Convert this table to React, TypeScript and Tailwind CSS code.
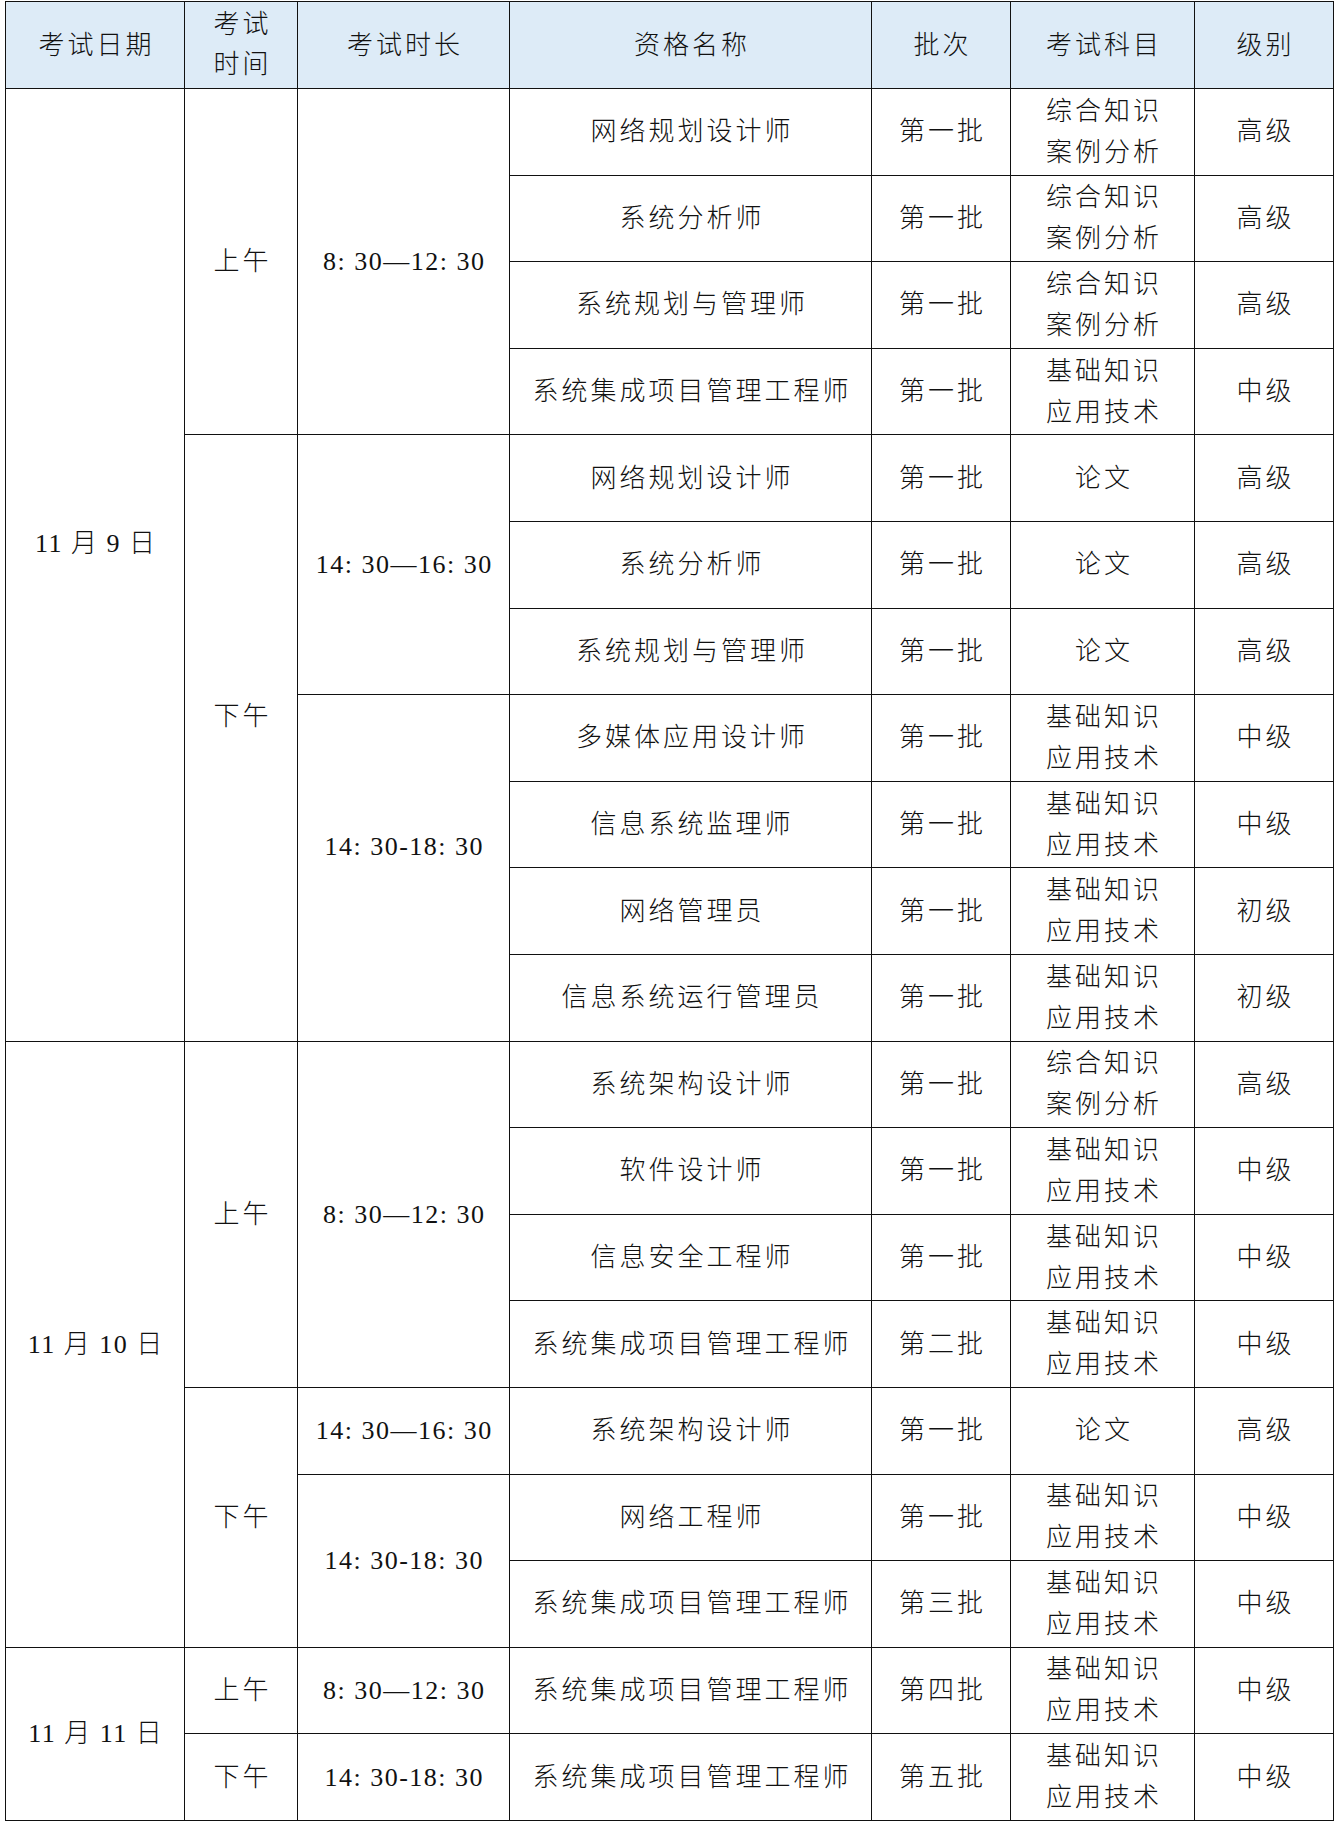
import React from "react";

type Span = { text: string; span: number; up?: boolean };
type Row = {
  date?: Span;
  time?: Span;
  dur?: Span;
  name: string;
  batch: string;
  subj: string[];
  level: string;
};

const JC = ["基础知识", "应用技术"];
const ZH = ["综合知识", "案例分析"];
const LW = ["论文"];

const rows: Row[] = [
  { date: { text: "11 月 9 日", span: 11, up: true }, time: { text: "上午", span: 4 }, dur: { text: "8: 30—12: 30", span: 4 }, name: "网络规划设计师", batch: "第一批", subj: ZH, level: "高级" },
  { name: "系统分析师", batch: "第一批", subj: ZH, level: "高级" },
  { name: "系统规划与管理师", batch: "第一批", subj: ZH, level: "高级" },
  { name: "系统集成项目管理工程师", batch: "第一批", subj: JC, level: "中级" },
  { time: { text: "下午", span: 7, up: true }, dur: { text: "14: 30—16: 30", span: 3 }, name: "网络规划设计师", batch: "第一批", subj: LW, level: "高级" },
  { name: "系统分析师", batch: "第一批", subj: LW, level: "高级" },
  { name: "系统规划与管理师", batch: "第一批", subj: LW, level: "高级" },
  { dur: { text: "14: 30-18: 30", span: 4, up: true }, name: "多媒体应用设计师", batch: "第一批", subj: JC, level: "中级" },
  { name: "信息系统监理师", batch: "第一批", subj: JC, level: "中级" },
  { name: "网络管理员", batch: "第一批", subj: JC, level: "初级" },
  { name: "信息系统运行管理员", batch: "第一批", subj: JC, level: "初级" },
  { date: { text: "11 月 10 日", span: 7 }, time: { text: "上午", span: 4 }, dur: { text: "8: 30—12: 30", span: 4 }, name: "系统架构设计师", batch: "第一批", subj: ZH, level: "高级" },
  { name: "软件设计师", batch: "第一批", subj: JC, level: "中级" },
  { name: "信息安全工程师", batch: "第一批", subj: JC, level: "中级" },
  { name: "系统集成项目管理工程师", batch: "第二批", subj: JC, level: "中级" },
  { time: { text: "下午", span: 3 }, dur: { text: "14: 30—16: 30", span: 1 }, name: "系统架构设计师", batch: "第一批", subj: LW, level: "高级" },
  { dur: { text: "14: 30-18: 30", span: 2 }, name: "网络工程师", batch: "第一批", subj: JC, level: "中级" },
  { name: "系统集成项目管理工程师", batch: "第三批", subj: JC, level: "中级" },
  { date: { text: "11 月 11 日", span: 2 }, time: { text: "上午", span: 1 }, dur: { text: "8: 30—12: 30", span: 1 }, name: "系统集成项目管理工程师", batch: "第四批", subj: JC, level: "中级" },
  { time: { text: "下午", span: 1 }, dur: { text: "14: 30-18: 30", span: 1 }, name: "系统集成项目管理工程师", batch: "第五批", subj: JC, level: "中级" },
];

const cell = "border-[1.5px] border-[#111] text-center align-middle p-0";
const upCell = "border-[1.5px] border-[#111] text-center align-middle p-0 pb-[42px]";
const txt = "tracking-[3px] pl-[3px]";

export default function App() {
  return (
    <div
      className="w-[1338px] h-[1828px] bg-white pl-[5px] pt-[1px] text-[#111] text-[26px] leading-[41px] font-light"
      style={{ fontFamily: '"Liberation Serif", "Noto Sans CJK SC", serif' }}
    >
      <table className="border-collapse table-fixed w-[1328px]">
        <colgroup>
          <col className="w-[179px]" />
          <col className="w-[113px]" />
          <col className="w-[212px]" />
          <col className="w-[362px]" />
          <col className="w-[139px]" />
          <col className="w-[184px]" />
          <col className="w-[139px]" />
        </colgroup>
        <thead>
          <tr className="h-[87px] bg-[#ddebf7]">
            <th className={`${cell} font-light`}><span className={txt}>考试日期</span></th>
            <th className={`${cell} font-light leading-[40px]`}>
              <div className={txt}>考试</div>
              <div className={txt}>时间</div>
            </th>
            <th className={`${cell} font-light`}><span className={txt}>考试时长</span></th>
            <th className={`${cell} font-light`}><span className={txt}>资格名称</span></th>
            <th className={`${cell} font-light`}><span className={txt}>批次</span></th>
            <th className={`${cell} font-light`}><span className={txt}>考试科目</span></th>
            <th className={`${cell} font-light`}><span className={txt}>级别</span></th>
          </tr>
        </thead>
        <tbody>
          {rows.map((r, i) => (
            <tr key={i} className="h-[86.6px]">
              {r.date && (
                <td rowSpan={r.date.span} className={r.date.up ? upCell : cell}>
                  <span className="tracking-[1.5px] pl-[1.5px]">{r.date.text}</span>
                </td>
              )}
              {r.time && (
                <td rowSpan={r.time.span} className={r.time.up ? upCell : cell}>
                  <span className={txt}>{r.time.text}</span>
                </td>
              )}
              {r.dur && (
                <td rowSpan={r.dur.span} className={r.dur.up ? upCell : cell}>
                  <span className="tracking-[1.5px] pl-[1.5px]">{r.dur.text}</span>
                </td>
              )}
              <td className={cell}>
                <span className={txt}>{r.name}</span>
              </td>
              <td className={cell}>
                <span className={txt}>{r.batch}</span>
              </td>
              <td className={cell}>
                {r.subj.map((s) => (
                  <div key={s} className={txt}>
                    {s}
                  </div>
                ))}
              </td>
              <td className={cell}>
                <span className={txt}>{r.level}</span>
              </td>
            </tr>
          ))}
        </tbody>
      </table>
    </div>
  );
}
